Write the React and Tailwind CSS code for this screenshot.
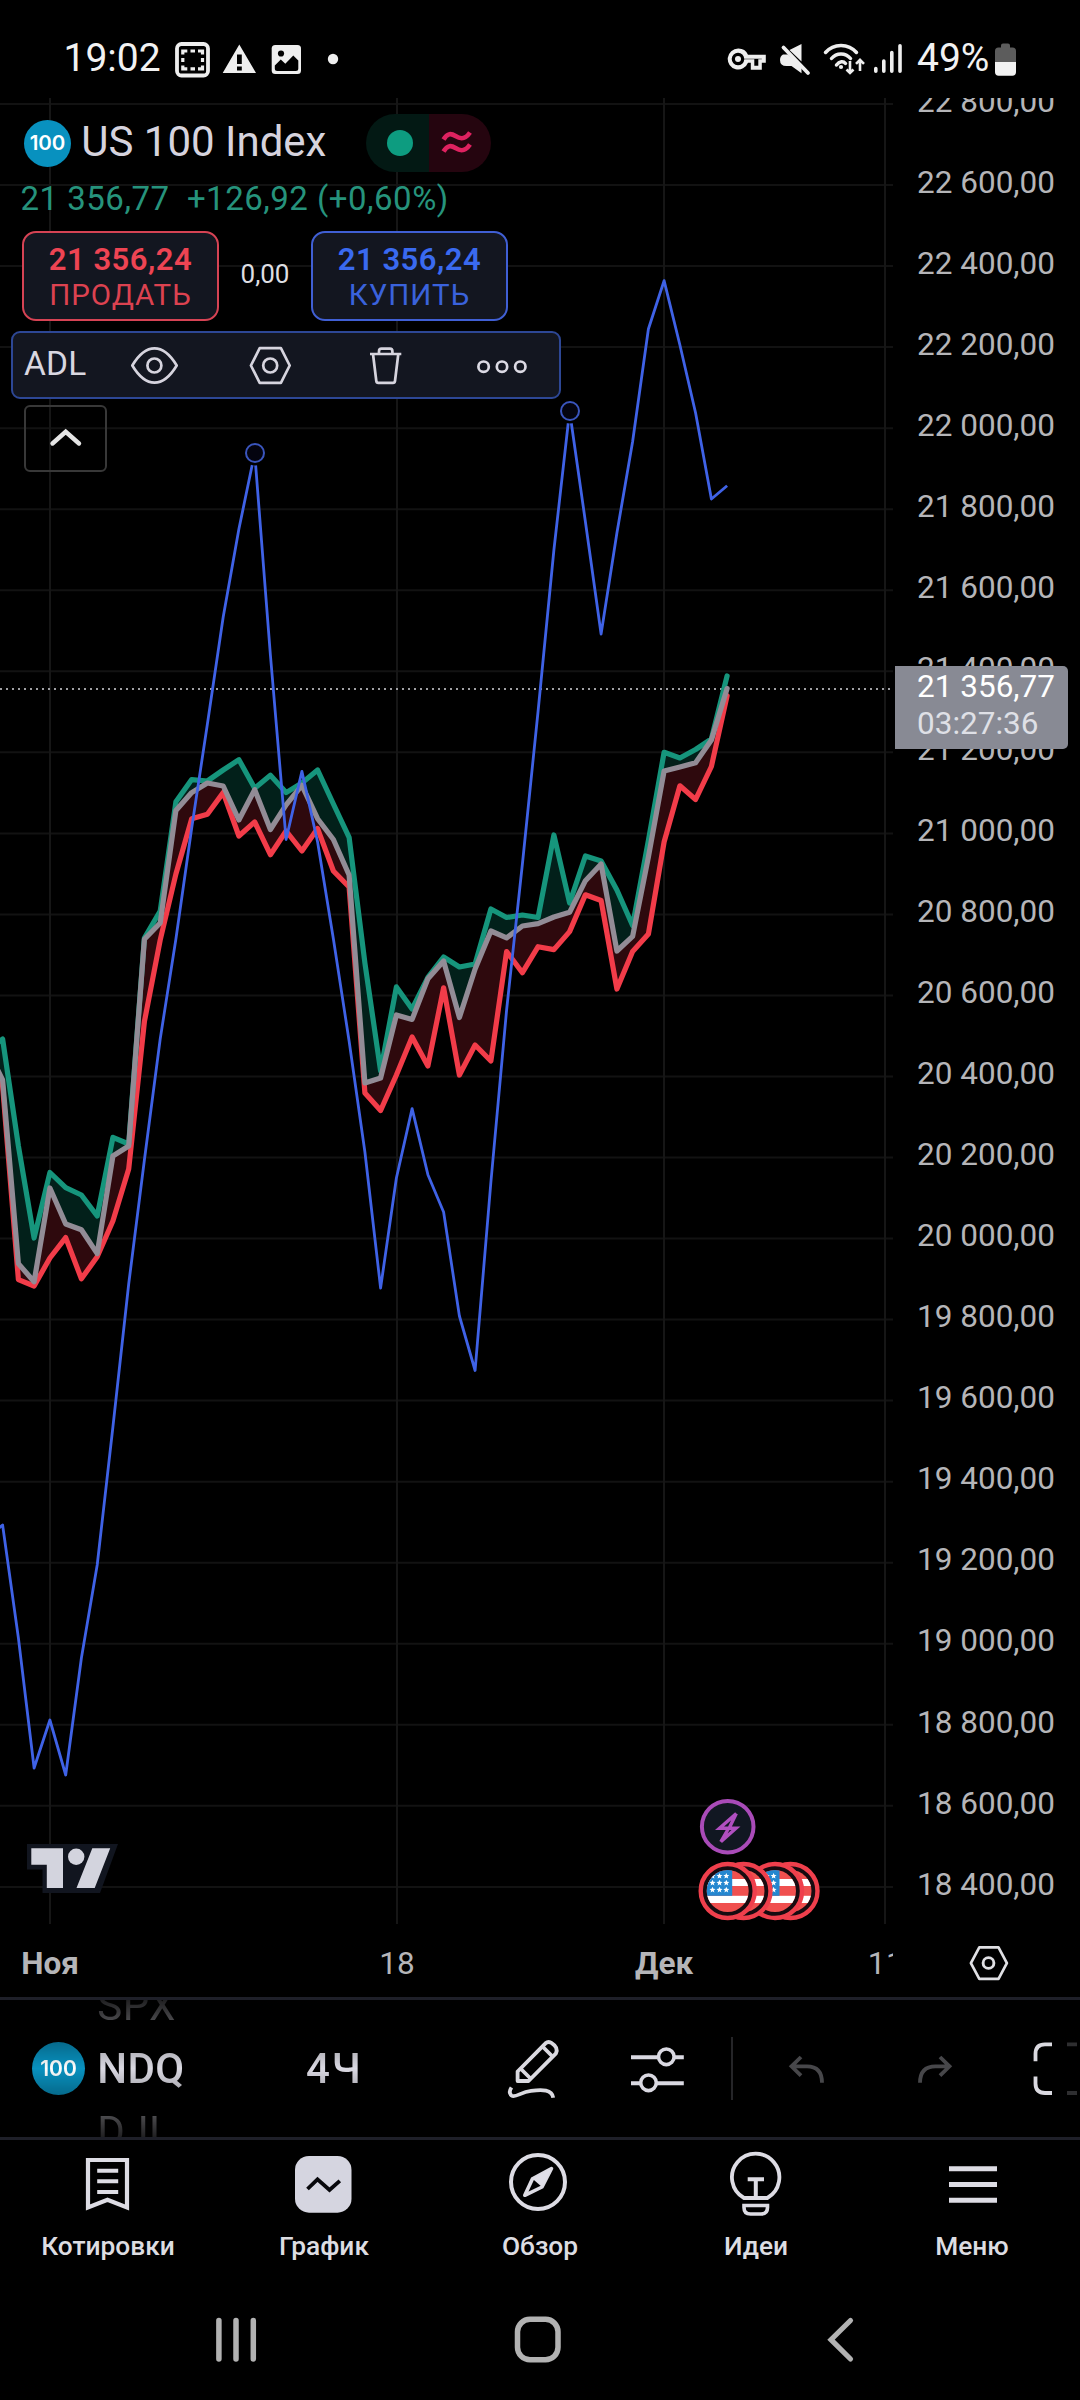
const GREEN = [1051, 1039, 1146, 1238, 1172.5, 1187.7, 1195, 1216, 1137.4, 1144, 938, 911, 801.8, 779.6, 781, 770, 759.7, 788.3, 775.3, 792.6, 783, 770, 804, 837.3, 963, 1071, 986.9, 1009, 977.4, 957, 967, 964, 909, 917.5, 915, 917.5, 835, 903, 856, 861, 890, 925.5, 840.6, 752.3, 758, 749.5, 739, 675.9];
const GRAY = [1048, 1080, 1263.6, 1281.8, 1188, 1224, 1229.8, 1253.6, 1156, 1146, 939.2, 923, 810.4, 792.6, 783, 786, 820, 789.6, 829.5, 804.8, 785.3, 818.7, 839.5, 875, 1083, 1078, 1015, 1019.4, 978.8, 961, 1017.5, 969, 931, 937.8, 926, 923.6, 917, 912.3, 880.7, 864, 951, 936.4, 857, 771, 767, 762.7, 740, 688.6];
const RED = [1052, 1086, 1279.6, 1286, 1258, 1237.6, 1278.8, 1256.7, 1221, 1169, 1021.6, 940, 874, 818.7, 814.3, 792.6, 836, 822, 854.7, 831, 851, 828.6, 871, 887, 1093, 1110.5, 1075, 1037, 1066, 987.8, 1075, 1045, 1061, 951.5, 972.7, 946.7, 949.6, 931.6, 894.8, 900.5, 989, 951.5, 934, 842, 785.8, 799.5, 766.5, 695.7];
const BLUE = [1538, 1525, 1638, 1768, 1720, 1775, 1658, 1565, 1427, 1284, 1160, 1039, 939, 828, 724, 617, 529, 453, 655, 839.5, 771.4, 842, 939, 1041, 1152, 1288, 1178, 1108.6, 1174.7, 1212, 1316, 1370.5, 1182, 1010, 864, 711, 550, 411, 521.7, 634, 533, 441.7, 329, 280.7, 345, 413, 499, 485.7];

const xAt = (i) => 49.9 + 15.75 * (i - 4);
const pts = (s) => s.map((y, i) => `${xAt(i).toFixed(1)},${y}`);
const line = (s) => pts(s).join(' ');
const band = (a, b) => [...pts(a), ...pts(b).reverse()].join(' ');

const PRICES = Array.from({ length: 23 }, (_, i) => {
  const v = 22800 - i * 200;
  return `${Math.floor(v / 1000)} ${String(v % 1000).padStart(3, '0')},00`;
});

function Badge({ className }) {
  return (
    <div className={`flex shrink-0 items-center justify-center rounded-full bg-[#0891bf] font-['Inter'] font-semibold text-white ${className}`}>
      100
    </div>
  );
}

function Svg({ box, className = '', children, ...rest }) {
  const [, , w, h] = box.split(' ');
  return (
    <svg viewBox={box} width={w} height={h} fill="none" className={`shrink-0 ${className}`} {...rest}>
      {children}
    </svg>
  );
}

function StatusBar() {
  return (
    <div className="flex h-[98px] shrink-0 items-start bg-black text-[#f2f2f2]">
      <div className="ml-[63.5px] mt-[33px] w-[106px] text-[39px] leading-[50px]">19:02</div>
      <Svg box="170 34 180 50" className="mt-[33px]">
        <rect x="177" y="45" width="31" height="31.5" rx="4.5" stroke="#eee" strokeWidth="3.8" />
        <path d="M182.800 55.500v-3.500h4.500M190.500 52h4.500M198 52h4.500v3.500M202.500 59v4M202.500 66.500v3.300H198M195 69.800h-4.500M187.300 69.800h-4.500v-3.300M182.800 63v-4" stroke="#eee" strokeWidth="3.2" />
        <path fillRule="evenodd" clipRule="evenodd" d="M239.300 45.500 256 74h-33.300zM237 55.500v9.500h4.800v-9.500zM237 67.500v4h4.800v-4z" fill="#eee" />
        <rect x="271.700" y="46" width="29.300" height="29" rx="3.500" fill="#eee" />
        <circle cx="281" cy="54.500" r="3.100" fill="#000" />
        <path d="M274.800 69.500v-3l6-6 4.500 4.200 8-8.200 5 5v8q0 2.500-2.500 2.500h-18.500q-2.500 0-2.500-2.500z" fill="#000" />
        <circle cx="333" cy="60" r="5.200" fill="#eee" />
      </Svg>
      <Svg box="720 34 190 50" className="ml-[370px] mt-[33px]">
        <path fillRule="evenodd" clipRule="evenodd" d="M738.200 49.500a10.500 10.500 0 1 0 9.800 14.300h2.800v7h11v-7h4V55.800H748a10.500 10.500 0 0 0-9.800-6.300zm0 4.200a6.300 6.300 0 0 1 6 6h17.600v0.600h-3.500v6.500h-4v-6.500h-10a6.300 6.300 0 1 1-6.100-6.600z" fill="#eee" />
        <circle cx="738" cy="60" r="3" fill="#eee" />
        <path d="M801.500 45v17.500L789.500 51zM783 55.500h5l13.500 12.500v6.300L791.500 67h-5q-6.500 0-6.500-6 0-4 3-5.500z" fill="#eee" />
        <path d="M783.500 48.500 808 74" stroke="#eee" strokeWidth="3.800" strokeLinecap="round" />
        <g stroke="#eee" strokeWidth="3.500" strokeLinecap="round">
          <path d="M825.500 53.500c8-9.500 23-9.500 31 0M831.500 59.500c5-6 14-6 19 0M836.500 66c3-4 7-4 9-1.500" />
        </g>
        <circle cx="841" cy="68" r="2.100" fill="#eee" />
        <path d="M850 62v11.500M846.500 70.500l3.500 3.500 3.500-3.500M860 72V61.500M856 64.800l4-4 4 4" stroke="#eee" strokeWidth="2.600" />
        <path d="M875.800 69.500v2.800M883.800 62v10.300M891.800 53.500v18.800M900 46.800v25.500" stroke="#eee" strokeWidth="3.600" strokeLinecap="round" />
      </Svg>
      <div className="ml-[7.500px] mt-[33px] w-[77px] text-[39px] leading-[50px]">49%</div>
      <Svg box="994 40 24 40" className="mt-[40px]">
        <path d="M995 62V51q0-3.500 3.500-3.500h2.500v-2q0-2 2-2h5q2 0 2 2v2h2.500q3.500 0 3.500 3.500v11z" fill="#5c5c5c" />
        <path d="M995 62h21v10q0 3.700-3.700 3.700h-13.600q-3.700 0-3.700-3.700z" fill="#f2f2f2" />
      </Svg>
    </div>
  );
}

function Flag({ cx }) {
  return (
    <g transform={`translate(${cx} 1891)`}>
      <circle r="27" fill="#170b10" stroke="#ef3f4c" strokeWidth="4.400" />
      <g clipPath="url(#flagClip)">
        <rect x="-22" y="-22" width="44" height="44" fill="#f0504f" />
        <rect x="-22" y="-12" width="44" height="7" fill="#fff" />
        <rect x="-22" y="4.800" width="44" height="7.200" fill="#fff" />
        <rect x="-22" y="-22" width="26.500" height="26.800" fill="#2487d0" />
        {[-15, -8.200, -1.200].map((y) =>
          [-15.200, -8.200, -1.400].map((x) => (
            <path key={`${x}${y}`} transform={`translate(${x} ${y})`} d="M0-3 .9-1 3-.9 1.300.600 1.900 2.600 0 1.500-1.900 2.600-1.300.600-3-.9-.9-1z" fill="#fff" />
          ))
        )}
      </g>
    </g>
  );
}

function Plot() {
  return (
    <svg viewBox="0 98 895 1826" width="895" height="1826" fill="none" className="block">
      <defs>
        <clipPath id="flagClip">
          <circle r="21" />
        </clipPath>
      </defs>
      {PRICES.map((p, i) => (
        <path key={p} d={`M0 ${(104 + i * 81.04).toFixed(1)}H893`} stroke="#121212" strokeWidth="2" />
      ))}
      {[50, 397, 664, 885].map((x) => (
        <path key={x} d={`M${x} 98V1924`} stroke="#161616" strokeWidth="2" />
      ))}
      <polygon points={band(GREEN, GRAY)} fill="#02201a" />
      <polygon points={band(RED, GRAY)} fill="#2e090d" />
      <path d="M0 689H894" stroke="#a0a0a4" strokeWidth="1.800" strokeDasharray="2 4" />
      <g strokeLinejoin="round" strokeLinecap="round" strokeWidth="5.2">
        <polyline points={line(RED)} stroke="#f23c49" />
        <polyline points={line(GREEN)} stroke="#16957c" />
        <polyline points={line(GRAY)} stroke="#928c96" />
      </g>
      <polyline points={line(BLUE)} stroke="#3f62e6" strokeWidth="2.800" strokeLinejoin="round" />
      {[[255, 453], [570, 411]].map(([x, y]) => (
        <g key={x}>
          <circle cx={x} cy={y} r="12.500" fill="#000" />
          <circle cx={x} cy={y} r="9" fill="#04040f" stroke="#3a55bd" strokeWidth="2" />
        </g>
      ))}
      <circle cx="727.700" cy="1826.700" r="25.800" fill="#111722" stroke="#a94bb8" strokeWidth="4" />
      <path d="M736.300 1813.500 719.500 1828.300H736L720.800 1841.800M736.300 1813.500 729.500 1827.500M720.800 1841.800 728.500 1828.500" stroke="#b04fc0" strokeWidth="3.400" />
      <Flag cx={790.500} />
      <Flag cx={775} />
      <Flag cx={743.500} />
      <Flag cx={727.700} />
      <path d="M27 1844h91l-18 49H42.500v-23.500H27z" fill="#11151f" />
      <path d="M31.300 1848.300H63V1888H46.800v-23.300H31.300zM92.300 1848.300h17.900L94.700 1888H76.500z" fill="#d3d4de" />
      <circle cx="76.200" cy="1856.700" r="8.200" fill="#d3d4de" />
    </svg>
  );
}

function Legend() {
  return (
    <div className="absolute left-0 top-0 flex flex-col items-start">
      <div className="ml-[24px] mt-[16px] flex h-[58px] items-center">
        <Badge className="h-[47px] w-[47px] text-[20.500px]" />
        <span className="-mt-[2px] ml-[10.200px] whitespace-nowrap text-[42px] leading-[50px] text-[#d6d3de]">US 100 Index</span>
        <div className="ml-[40px] flex h-[58px] overflow-hidden rounded-full">
          <div className="flex w-[63px] items-center justify-center bg-[#031914]">
            <div className="ml-1 h-[26px] w-[26px] rounded-full bg-[#0d9c80]" />
          </div>
          <div className="flex w-[62px] items-center bg-[#25050f]">
            <Svg box="440 129 36 30" className="ml-[10px]">
              <path d="M444.500 140.500c4-7 8-6 12-3.500s9 4.500 14.500-3.500M444.500 152.500c4-7 8-6 12-3.500s9 4.500 14.500-3.500" stroke="#de2260" strokeWidth="4.600" />
            </Svg>
          </div>
        </div>
      </div>
      <div className="ml-[20.500px] mt-[7px] h-[39px] whitespace-pre text-[33px] leading-[40px] tracking-[0.500px] text-[#26937c]">
        {'21 356,77  +126,92 (+0,60%)'}
      </div>
      <div className="ml-[22px] mt-[13px] flex h-[90px]">
        <div className="flex w-[197px] flex-col items-center justify-center rounded-[14px] border-2 border-[#d64354] bg-[#131620] pt-[3px] text-[#ee4453]">
          <span className="text-[31px] font-semibold leading-[35px] tracking-[0.500px]">21 356,24</span>
          <span className="text-[29.500px] leading-[36px] tracking-[1px] text-[#dc4250]">ПРОДАТЬ</span>
        </div>
        <div className="flex w-[92px] items-center justify-center pb-[4px] text-[26px] text-[#dedee2]">0,00</div>
        <div className="flex w-[197px] flex-col items-center justify-center rounded-[14px] border-2 border-[#405fd4] bg-[#131620] pt-[3px] text-[#3a6af0]">
          <span className="text-[31px] font-semibold leading-[35px] tracking-[0.500px]">21 356,24</span>
          <span className="text-[29.500px] leading-[36px] tracking-[1px] text-[#3a62dc]">КУПИТЬ</span>
        </div>
      </div>
      <div className="ml-[11px] mt-[10px] flex h-[68px] w-[550px] items-center rounded-[9px] border-2 border-[#2d4795] bg-[#131620]">
        <div className="w-[83px] shrink-0 pb-[3px] pl-[11px] text-[33.500px] leading-[40px] tracking-[0.200px] text-[#d9d7e0]">ADL</div>
        <div className="flex w-[116px] shrink-0 justify-center">
          <Svg box="129 343 50 45">
            <path d="M132.300 365.500C146 342.700 163 342.700 176.700 365.500C163 388.300 146 388.300 132.300 365.500Z" stroke="#d6d4de" strokeWidth="2.700" strokeLinejoin="round" />
            <circle cx="154.400" cy="365.500" r="7" stroke="#d6d4de" strokeWidth="2.700" />
          </Svg>
        </div>
        <div className="flex w-[116px] shrink-0 justify-center">
          <Svg box="247.500 343 46 45">
            <path d="M260.200 348.200h21.200l8.800 17.300-8.800 17.300h-21.200l-8.800-17.300z" stroke="#d6d4de" strokeWidth="2.700" strokeLinejoin="round" />
            <circle cx="270.700" cy="365.500" r="7" stroke="#d6d4de" strokeWidth="2.700" />
          </Svg>
        </div>
        <div className="flex w-[116px] shrink-0 justify-center">
          <Svg box="366 343 40 45">
            <path d="M370 354h31.300M373 354l3.300 27q.2 1.800 2 1.800h14.700q1.800 0 2-1.800l3.300-27M379 353.500v-2.300q0-2.500 2.500-2.500h8.400q2.500 0 2.500 2.500v2.300" stroke="#d6d4de" strokeWidth="2.700" />
          </Svg>
        </div>
        <div className="flex w-[116px] shrink-0 justify-center">
          <Svg box="475.700 343 54 45">
            {[484.300, 502.700, 521].map((x) => (
              <circle key={x} cx={x} cy="366.700" r="5.200" stroke="#dcdae4" strokeWidth="2.700" />
            ))}
          </Svg>
        </div>
      </div>
      <div className="ml-[24px] mt-[6px] flex h-[67px] w-[83px] items-center justify-center rounded-[6px] border-2 border-[#383838]">
        <Svg box="49 426.500 34 24">
          <path d="M52.500 443 65.700 431.300 79 443" stroke="#e4e4e4" strokeWidth="4.400" strokeLinecap="round" />
        </Svg>
      </div>
    </div>
  );
}

function PriceAxis() {
  return (
    <div className="relative h-full w-[185px] overflow-hidden text-[31.500px] text-[#b5b5b8]">
      <div className="-mt-[37px] flex flex-col pl-[22px]">
        {PRICES.map((p) => (
          <div key={p} className="flex h-[81.040px] shrink-0 items-center whitespace-nowrap">{p}</div>
        ))}
      </div>
      <div className="absolute left-0 top-[568px] h-[83px] w-[173px] rounded-r-[5px] bg-[#888a94] pl-[22px] pt-[2px] leading-[37px]">
        <div className="text-white">21 356,77</div>
        <div className="text-[#dfe0e6]">03:27:36</div>
      </div>
    </div>
  );
}

function TimeAxis() {
  return (
    <div className="flex h-[73px] shrink-0 items-center">
      <div className="flex h-full w-[893px] items-center overflow-hidden pt-[6px] text-[31.500px] text-[#b5b5b8]">
        <div className="ml-[50px] flex w-0 justify-center font-bold">Ноя</div>
        <div className="ml-[347px] flex w-0 justify-center">18</div>
        <div className="ml-[267px] flex w-0 justify-center font-bold">Дек</div>
        <div className="ml-[222px] flex w-0 justify-center tracking-[0.500px]">11</div>
      </div>
      <Svg box="966 1943 45 40" className="ml-[73px] mt-[5px]">
        <path d="M979.300 1947.300h19.200l8.400 15.800-8.400 15.800h-19.200l-8.400-15.800z" stroke="#e0e0e4" strokeWidth="2.700" strokeLinejoin="round" />
        <circle cx="988.500" cy="1963" r="5.400" stroke="#e0e0e4" strokeWidth="2.900" />
      </Svg>
    </div>
  );
}

const FADE =
  '[mask-image:linear-gradient(to_bottom,rgba(0,0,0,0.15)_0%,rgba(0,0,0,0.32)_14%,rgba(0,0,0,0.72)_30%,black_50%,rgba(0,0,0,0.72)_70%,rgba(0,0,0,0.32)_86%,rgba(0,0,0,0.15)_100%)]';

function Toolbar() {
  return (
    <div className="flex h-[143px] shrink-0 items-center overflow-hidden border-y-[3px] border-[#1e1f28] text-[42px] text-[#dad9e2]">
      <div className={`flex h-full w-[297px] shrink-0 items-center overflow-hidden pl-[32px] ${FADE}`}>
        <Badge className="h-[53px] w-[53px] text-[21px]" />
        <div className="-mt-[1px] ml-[12.300px] flex flex-col leading-[63px] tracking-[0.400px]">
          <span>SPX</span>
          <span className="font-medium">NDQ</span>
          <span>DJI</span>
        </div>
      </div>
      <div className={`flex h-full w-[80px] shrink-0 items-center pl-[9px] font-medium tracking-[1.800px] ${FADE}`}>4Ч</div>
      <Svg box="504 2034 60 68" className="ml-[127px]" stroke="#dad9e0" strokeWidth="3.800">
        <path d="M517.600 2080v-9.500L545.500 2042.300q3-2.500 6.500 0 6.500 4 4 10L528.500 2080z" strokeLinejoin="round" />
        <path d="M520.500 2067.500l10.500 10.500M542.500 2045.500l10.500 10.500" />
        <path d="M511.500 2086.500q-3.500 5 0 8c4 2.800 9-3.500 19.500-4.700 11.500-1.200 21-1.500 22.200 7" />
      </Svg>
      <Svg box="628 2042 60 54" className="ml-[64px]" stroke="#dad9e2" strokeWidth="4">
        <path d="M631 2057.300h26.500M674.500 2057.300h9.300M631 2083.300h9.300M657 2083.300h26.800" />
        <circle cx="666.300" cy="2056.800" r="7.800" strokeWidth="3.600" />
        <circle cx="648.500" cy="2082.800" r="7.800" strokeWidth="3.600" />
      </Svg>
      <div className="ml-[43px] h-[63px] w-[2px] shrink-0 bg-[#252528]" />
      <Svg box="785 2050 44 36" className="ml-[52px]" stroke="#47474a" strokeWidth="3.800">
        <path d="M801 2056l-9.500 9.300 9.500 9.300M792 2065.300h15q15 0 15 16.500" />
      </Svg>
      <Svg box="914 2050 42 36" className="ml-[85px]" stroke="#47474a" strokeWidth="3.800">
        <path d="M940 2056l9.500 9.300-9.500 9.300M949 2065.300h-13.500q-15.500 0-15.500 16.500" />
      </Svg>
      <Svg box="1030 2038 50 62" className="ml-[74px]" stroke="#dad9e0" strokeWidth="3.800">
        <path d="M1052 2044.300h-7q-9.500 0-9.500 9.500v7.500M1052 2093h-7q-9.500 0-9.500-9.500v-7" />
        <path d="M1067 2044.300h10M1067 2093h10" stroke="#2e2e30" />
      </Svg>
    </div>
  );
}

const TABS = [
  ['Котировки', '76 2149 64 70', (
    <>
      <path d="M88 2160h39v47.500l-19.500-7.700L88 2207.500z" strokeWidth="4.200" />
      <path d="M97.200 2170.700h21M97.200 2181.300h21M97.200 2192h21" strokeWidth="4" />
    </>
  )],
  ['График', '292 2149 64 70', (
    <>
      <rect x="295" y="2156" width="56.500" height="56.700" rx="14" fill="#d5d5e0" stroke="none" />
      <path d="M307.500 2189l10-9.700 12 10.700 10.300-9.200" stroke="#08080c" strokeWidth="3.800" />
    </>
  )],
  ['Обзор', '508 2149 64 70', (
    <>
      <circle cx="538" cy="2182" r="27" strokeWidth="4" />
      <path d="M551.500 2168.500l-19 10.300-7.700 16.500L542 2187z" strokeWidth="3.600" strokeLinejoin="round" />
      <path d="M551.500 2168.500l-19 10.300 9.500 8.200z" fill="#e0dfe8" stroke="none" />
    </>
  )],
  ['Идеи', '724 2149 64 70', (
    <>
      <path d="M744 2198a23.700 23.700 0 1 1 23.300 0z" strokeWidth="3.800" strokeLinejoin="round" />
      <path d="M747.700 2179.300h16.300M755.800 2179.300v18" strokeWidth="4" />
      <path d="M744 2205.500h23.500v2q0 6.500-6.500 6.500h-10.500q-6.500 0-6.500-6.500z" strokeWidth="3.600" />
    </>
  )],
  ['Меню', '940 2149 64 70', (
    <path d="M949 2168.700h48M949 2184.500h48M949 2200.300h48" strokeWidth="5" />
  )],
];

function TabBar() {
  return (
    <div className="grid h-[150px] shrink-0 grid-cols-5">
      {TABS.map(([label, box, icon]) => (
        <div key={label} className="flex flex-col items-center">
          <Svg box={box} className="mt-[9px]" stroke="#dddce4">{icon}</Svg>
          <span className="mt-[9.500px] text-[26.300px] font-medium leading-[34px] text-[#dddde2]">{label}</span>
        </div>
      ))}
    </div>
  );
}

function SystemNav() {
  return (
    <div className="flex flex-1 items-center pb-[11px] pl-[84.500px]">
      <div className="flex w-[302.500px] justify-center">
        <Svg box="210.500 2312 50 56" stroke="#b2b2b2" strokeWidth="5.500" strokeLinecap="round">
          <path d="M218.400 2320.500v38.500M235.500 2320.500v38.500M252.800 2320.500v38.500" />
        </Svg>
      </div>
      <div className="flex w-[302.500px] justify-center">
        <Svg box="510 2312 56 56" stroke="#b2b2b2" strokeWidth="5.500">
          <rect x="517.500" y="2319.300" width="40.500" height="40.500" rx="12.500" />
        </Svg>
      </div>
      <div className="flex w-[302.500px] justify-center">
        <Svg box="815.500 2312 50 56" stroke="#b2b2b2" strokeWidth="5.200" strokeLinecap="round">
          <path d="M850 2320.500 830.500 2339.700 850 2359" />
        </Svg>
      </div>
    </div>
  );
}

export default function App() {
  return (
    <div className="flex h-[2400px] w-[1080px] flex-col overflow-hidden bg-black font-['Roboto',sans-serif]">
      <StatusBar />
      <div className="flex h-[1826px] shrink-0">
        <div className="relative w-[895px]">
          <Plot />
          <Legend />
        </div>
        <PriceAxis />
      </div>
      <TimeAxis />
      <Toolbar />
      <TabBar />
      <SystemNav />
    </div>
  );
}
